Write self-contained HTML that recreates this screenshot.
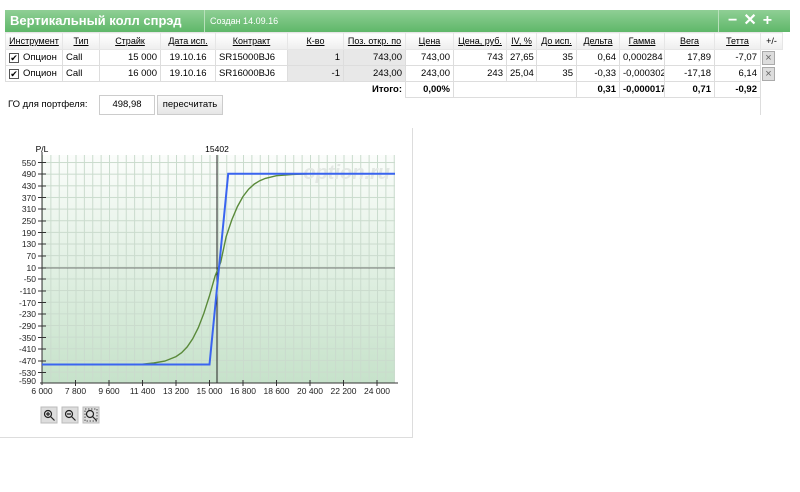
<!DOCTYPE html>
<html><head><meta charset="utf-8"><style>
body{margin:0;width:800px;height:492px;background:#fff;font-family:"Liberation Sans",sans-serif;font-size:9px;color:#000;position:relative;overflow:hidden}
.bar{position:absolute;left:5px;top:10px;width:785px;height:22px;background:linear-gradient(#8fcf95,#5fb769)}
.t1{position:absolute;left:5px;top:10px;width:200px;height:22px;color:#fff;font-weight:bold;font-size:13px;line-height:22px;padding-left:5px;box-sizing:border-box;border-right:1px solid #b8e0bb}
.t2{position:absolute;left:206px;top:10px;color:#fff;font-size:9px;line-height:22px;padding-left:4px}
.t3{position:absolute;left:718px;top:10px;width:72px;height:22px;border-left:1px solid #b8e0bb;color:#fff;font-weight:bold;font-size:16px;line-height:21px;letter-spacing:6px;padding-left:9px;box-sizing:border-box}
table{position:absolute;left:5px;top:32px;border-collapse:collapse;table-layout:fixed;width:777px}
td{height:15px;padding:0 3px;border:1px solid #ddd;white-space:nowrap;overflow:hidden;font-size:9.5px}
tr.h td{text-align:center;text-decoration:underline;background:linear-gradient(#fff,#eee);height:16px;border-color:#e6e6e6;font-size:9px}
.r{text-align:right}.c{text-align:center}.g{background:#e8e8e8}
.b{font-weight:bold}
.cb{display:inline-block;width:8px;height:8px;border:1px solid #555;vertical-align:-1px;margin-right:4px;font-size:9px;line-height:8px;text-align:center}
.x{display:inline-block;width:11px;height:12px;background:#ddd;border:1px solid #aaa;color:#666;font-size:11px;line-height:12px;text-align:center}
</style></head><body>
<div class="bar"></div>
<div class="t1">Вертикальный колл спрэд</div>
<div class="t2">Создан 14.09.16</div>
<div class="t3">−✕+</div>
<table>
<colgroup><col style="width:57px"><col style="width:37px"><col style="width:61px"><col style="width:55px"><col style="width:72px"><col style="width:56px"><col style="width:62px"><col style="width:48px"><col style="width:53px"><col style="width:30px"><col style="width:40px"><col style="width:43px"><col style="width:45px"><col style="width:50px"><col style="width:46px"><col style="width:22px"></colgroup>
<tr class="h"><td>Инструмент</td><td>Тип</td><td>Страйк</td><td>Дата исп.</td><td>Контракт</td><td>К-во</td><td>Поз. откр. по</td><td>Цена</td><td>Цена, руб.</td><td>IV, %</td><td>До исп.</td><td>Дельта</td><td>Гамма</td><td>Вега</td><td>Тетта</td><td style="text-decoration:none">+/-</td></tr>
<tr><td><span class="cb">✔</span>Опцион</td><td>Call</td><td class="r">15 000</td><td class="c">19.10.16</td><td>SR15000BJ6</td><td class="r g">1</td><td class="r g">743,00</td><td class="r">743,00</td><td class="r">743</td><td class="r">27,65</td><td class="r">35</td><td class="r">0,64</td><td class="r">0,000284</td><td class="r">17,89</td><td class="r">-7,07</td><td style="border:none;padding:0 1px"><span class="x">×</span></td></tr>
<tr><td><span class="cb">✔</span>Опцион</td><td>Call</td><td class="r">16 000</td><td class="c">19.10.16</td><td>SR16000BJ6</td><td class="r g">-1</td><td class="r g">243,00</td><td class="r">243,00</td><td class="r">243</td><td class="r">25,04</td><td class="r">35</td><td class="r">-0,33</td><td class="r">-0,000302</td><td class="r">-17,18</td><td class="r">6,14</td><td style="border:none;padding:0 1px"><span class="x">×</span></td></tr>
<tr><td colspan="7" class="r b" style="border:none;border-right:1px solid #ddd">Итого:</td><td class="r b">0,00%</td><td colspan="3" style="border:none;border-bottom:1px solid #ddd"></td><td class="r b">0,31</td><td class="r b">-0,000017</td><td class="r b">0,71</td><td class="r b">-0,92</td><td style="border:none"></td></tr>
</table>
<div style="position:absolute;left:760px;top:95px;width:1px;height:20px;background:#ddd"></div>
<div style="position:absolute;left:8px;top:99px;font-size:9.5px">ГО для портфеля:</div>
<div style="position:absolute;left:99px;top:95px;width:54px;height:18px;border:1px solid #ccc;text-align:center;line-height:18px;font-size:9.5px">498,98</div>
<div style="position:absolute;left:157px;top:95px;width:64px;height:18px;border:1px solid #ccc;background:linear-gradient(#fafafa,#e6e6e6);text-align:center;line-height:18px;font-size:9.5px">пересчитать</div>
<div style="position:absolute;left:0;top:128px;width:412px;height:309px;border-right:1px solid #ddd;border-bottom:1px solid #ddd"></div>
<svg style="position:absolute;left:0;top:0" width="800" height="492" font-family="Liberation Sans,sans-serif" font-size="8.5">
<defs>
<linearGradient id="bg" x1="0" y1="0" x2="0" y2="1"><stop offset="0" stop-color="#fbfdfb"/><stop offset="1" stop-color="#c6e2ca"/></linearGradient>
<pattern id="gv" x="42" y="0" width="8.375" height="500" patternUnits="userSpaceOnUse"><rect x="0" y="0" width="1" height="500" fill="#cadbcd"/></pattern>
<pattern id="gh" x="0" y="150.4" width="800" height="11.64" patternUnits="userSpaceOnUse"><rect x="0" y="0" width="800" height="1" fill="#cadbcd"/></pattern>
</defs>
<rect x="42" y="155" width="353" height="228" fill="url(#bg)"/>
<rect x="42" y="155" width="353" height="228" fill="url(#gv)"/>
<rect x="42" y="155" width="353" height="228" fill="url(#gh)"/>
<text x="390" y="179" font-size="20" font-weight="bold" font-style="italic" fill="#e2e7e3" text-anchor="end">option.ru</text>
<line x1="42" y1="268" x2="395" y2="268" stroke="#555" stroke-width="0.8"/>
<line x1="217" y1="155" x2="217" y2="383" stroke="#222" stroke-width="1"/>
<text x="217" y="152" text-anchor="middle">15402</text>
<line x1="42" y1="152" x2="42" y2="385" stroke="#333"/>
<line x1="40" y1="383" x2="398" y2="383" stroke="#333"/>
<text x="42" y="152" text-anchor="middle">P/L</text>
<g text-anchor="end" fill="#222">
<text x="36" y="166">550</text><text x="36" y="177">490</text><text x="36" y="189">430</text><text x="36" y="201">370</text><text x="36" y="212">310</text><text x="36" y="224">250</text><text x="36" y="236">190</text><text x="36" y="247">130</text><text x="36" y="259">70</text><text x="36" y="271">10</text><text x="36" y="282">-50</text><text x="36" y="294">-110</text><text x="36" y="306">-170</text><text x="36" y="317">-230</text><text x="36" y="329">-290</text><text x="36" y="341">-350</text><text x="36" y="352">-410</text><text x="36" y="364">-470</text><text x="36" y="376">-530</text><text x="36" y="384">-590</text>
</g>
<g stroke="#333"><path d="M38 162.5h8M38 174h8M38 186h8M38 197.5h8M38 209h8M38 221h8M38 232.5h8M38 244h8M38 256h8M38 268h8M38 279h8M38 291h8M38 302.5h8M38 314h8M38 326h8M38 337.5h8M38 349h8M38 361h8M38 372.5h8"/>
<path d="M75.5 380v6M109 380v6M142.5 380v6M176 380v6M209.5 380v6M243 380v6M276.5 380v6M310 380v6M343.5 380v6M377 380v6"/></g>
<g text-anchor="middle" fill="#222">
<text x="42" y="394">6 000</text><text x="75.5" y="394">7 800</text><text x="109" y="394">9 600</text><text x="142.5" y="394">11 400</text><text x="176" y="394">13 200</text><text x="209.5" y="394">15 000</text><text x="243" y="394">16 800</text><text x="276.5" y="394">18 600</text><text x="310" y="394">20 400</text><text x="343.5" y="394">22 200</text><text x="377" y="394">24 000</text>
</g>
<path d="M42 364.5L140 364.5L153.7 363.0L164.8 361.1L176 356.6L181.6 352.7L187.2 346.9L192.7 338.8L198.3 327.7L203.9 313.2L209.5 295.7L215.1 276L220.7 262.3L226.2 236.5L231.8 219.9L237.4 206.6L243 196.5L248.6 189.2L254.2 184.1L259.8 180.7L265.3 178.4L276.5 175.7L293.3 174.4L310 173.8L395 173.8" fill="none" stroke="#5a8a3a" stroke-width="1.4"/>
<path d="M42 364.5L209.5 364.5L228.2 173.8L395 173.8" fill="none" stroke="#3a64f0" stroke-width="2"/>
<g><rect x="41" y="407" width="16" height="16" fill="#ddd" stroke="#bbb"/><rect x="62" y="407" width="16" height="16" fill="#ddd" stroke="#bbb"/><rect x="83" y="407" width="16" height="16" fill="#ddd" stroke="#bbb"/>
<g fill="none" stroke="#222" stroke-width="1.2"><circle cx="48" cy="414" r="3.5"/><path d="M50.5 416.5l4 4M46 414h4M48 412v4"/><circle cx="69" cy="414" r="3.5"/><path d="M71.5 416.5l4 4M67 414h4"/><circle cx="90" cy="414" r="3.5"/><path d="M92.5 416.5l4 4"/><rect x="85" y="409" width="12" height="12" stroke-dasharray="1.5 1.5" stroke-width="0.8"/></g></g>
</svg>
</body></html>
